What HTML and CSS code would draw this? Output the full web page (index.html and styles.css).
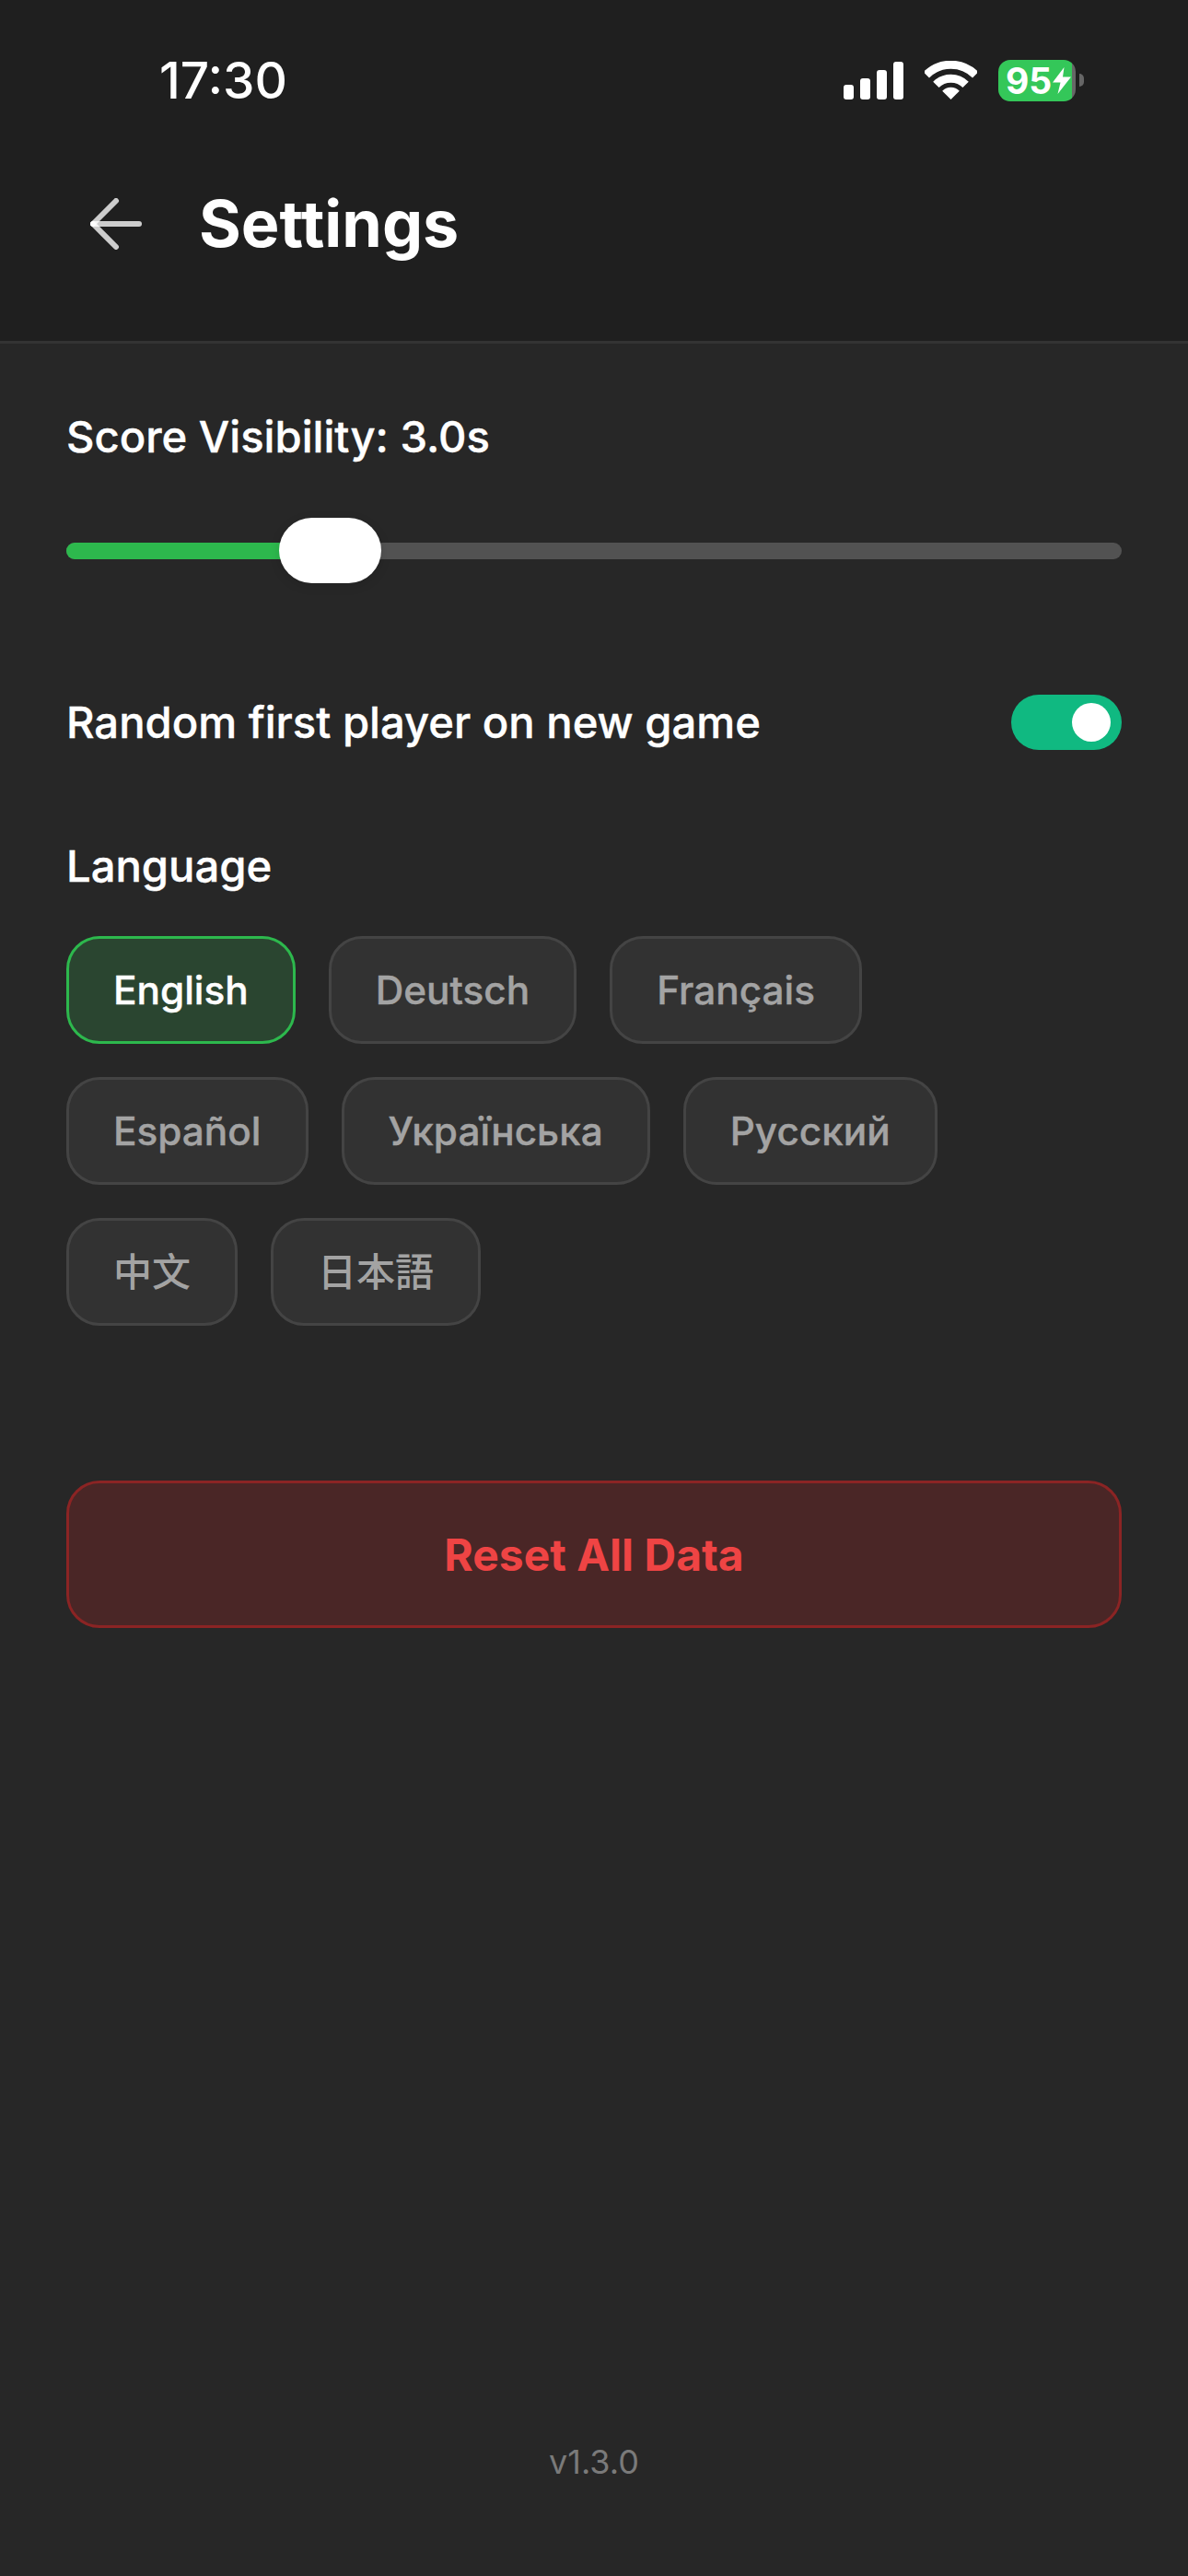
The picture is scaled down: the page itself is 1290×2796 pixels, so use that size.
FILE: index.html
```html
<!DOCTYPE html>
<html lang="en">
<head>
<meta charset="utf-8">
<title>Settings</title>
<link rel="stylesheet" href="styles.css">
</head>
<body>
<div class="screen">
  <header class="header">
    <div class="status">
      <span class="time">17:30</span>
      <div class="status-icons">
        <div class="signal"><i class="b1"></i><i class="b2"></i><i class="b3"></i><i class="b4"></i></div>
        <svg class="wifi" viewBox="0 0 57 42" width="57" height="42">
          <path d="M1.8 15.3A37.7 37.7 0 0 1 55.2 15.3" fill="none" stroke="#fff" stroke-width="9"/>
          <path d="M12.4 25.9A22.7 22.7 0 0 1 44.6 25.9" fill="none" stroke="#fff" stroke-width="9"/>
          <path d="M28.5 42L19.2 32.7A13 13 0 0 1 37.8 32.7Z" fill="#fff"/>
        </svg>
        <div class="battery">
          <div class="battery-body">
            <span class="battery-text">95</span>
            <svg class="bolt" viewBox="0 0 20 29" width="20" height="29"><path d="M12.5 0L0 16.5H8.5L5.5 29L20 10.5H11Z" fill="#fff"/></svg>
          </div>
          <div class="battery-cap"></div>
        </div>
      </div>
    </div>
    <div class="title-row">
      <svg class="back" viewBox="0 0 56 56" width="56" height="56">
        <g stroke="#fff" stroke-opacity="0.78" stroke-width="6" stroke-linecap="round" fill="none">
          <path d="M3 28H53"/>
          <path d="M28 3L3 28"/>
          <path d="M3 28L28 53"/>
        </g>
      </svg>
      <h1 class="title">Settings</h1>
    </div>
  </header>
  <main class="content">
    <div class="label score-label">Score Visibility: 3.0s</div>
    <div class="slider">
      <div class="slider-fill"></div>
      <div class="slider-thumb"></div>
    </div>
    <div class="toggle-row">
      <span class="label">Random first player on new game</span>
      <div class="toggle"><div class="knob"></div></div>
    </div>
    <div class="label lang-label">Language</div>
    <div class="chips">
      <div class="chip active">English</div>
      <div class="chip">Deutsch</div>
      <div class="chip">Français</div>
      <div class="chip">Español</div>
      <div class="chip">Українська</div>
      <div class="chip">Русский</div>
      <div class="chip cjk" lang="zh-Hans">中文</div>
      <div class="chip cjk ja" lang="ja">日本語</div>
    </div>
    <div class="reset">Reset All Data</div>
    <div class="version">v1.3.0</div>
  </main>
</div>
</body>
</html>
```
FILE: styles.css
```css
* { box-sizing: border-box; }
html, body { margin: 0; padding: 0; }
body {
  width: 1290px;
  height: 2796px;
  background: #272727;
  font-family: Inter, "Noto Sans CJK SC", sans-serif;
  color: #fff;
  overflow: hidden;
}
.screen { display: flex; flex-direction: column; height: 100%; }
.header {
  background: #1f1f1f;
  border-bottom: 3px solid #333;
  height: 373px;
  display: flex;
  flex-direction: column;
}
.status {
  height: 174px;
  padding: 0 113px 0 173px;
  display: flex;
  align-items: center;
  justify-content: space-between;
}
.time { font-size: 55px; font-weight: 500; line-height: 60px; }
.status-icons { display: flex; align-items: center; gap: 23px; }
.signal { display: flex; align-items: flex-end; gap: 7px; height: 41px; }
.signal i { display: block; width: 11px; background: #fff; border-radius: 3px; }
.signal .b1 { height: 16px; }
.signal .b2 { height: 23px; }
.signal .b3 { height: 32px; }
.signal .b4 { height: 41px; }
.wifi { display: block; }
.battery { display: flex; align-items: center; gap: 4px; }
.battery-body {
  width: 84px;
  height: 45px;
  border-radius: 13px;
  background: linear-gradient(90deg, #34c759 95%, #666 95%);
  display: flex;
  align-items: center;
  padding-left: 8px;
  gap: 1px;
}
.battery-text { font-size: 39px; font-weight: 700; line-height: 45px; }
.bolt { display: block; }
.battery-cap { width: 5px; height: 14px; background: #666; border-radius: 0 7px 7px 0; }
.title-row {
  display: flex;
  align-items: center;
  height: 138px;
  padding-left: 98px;
  gap: 62px;
}
.back { display: block; }
.title { margin: 0; font-size: 70px; font-weight: 700; line-height: 80px; }
.content {
  flex: 1;
  display: flex;
  flex-direction: column;
  padding: 0 72px;
}
.label {
  font-size: 47.2px;
  font-weight: 500;
  line-height: 60px;
  -webkit-text-stroke: 0.4px currentColor;
}
.score-label { margin-top: 71px; }
.slider {
  position: relative;
  height: 18px;
  margin-top: 85px;
  background: #525252;
  border-radius: 9px;
}
.slider-fill {
  width: 250px;
  height: 18px;
  background: #2db84d;
  border-radius: 9px 0 0 9px;
}
.slider-thumb {
  position: absolute;
  left: 231px;
  top: -27px;
  width: 111px;
  height: 71px;
  background: #fff;
  border-radius: 35.5px;
  box-shadow: 0 3px 12px rgba(0, 0, 0, 0.12);
}
.toggle-row {
  display: flex;
  align-items: center;
  justify-content: space-between;
  margin-top: 147px;
}
.toggle {
  width: 120px;
  height: 60px;
  border-radius: 30px;
  background: #10b981;
  display: flex;
  align-items: center;
  justify-content: flex-end;
  padding-right: 12px;
}
.knob { width: 42px; height: 42px; border-radius: 50%; background: #fff; }
.lang-label { margin-top: 96px; }
.chips {
  display: flex;
  flex-wrap: wrap;
  gap: 36px;
  margin-top: 46px;
}
.chip {
  height: 117px;
  padding: 0 48px;
  display: flex;
  align-items: center;
  background: #323232;
  border: 3px solid #444;
  border-radius: 36px;
  color: #a3a3a3;
  font-size: 42.3px;
  font-weight: 500;
  -webkit-text-stroke: 0.4px currentColor;
}
.chip.cjk { font-size: 42px; padding-bottom: 6px; -webkit-text-stroke: 0; }
.chip.ja { font-family: Inter, "Noto Sans CJK JP", sans-serif; }
.chip.active {
  background: #2a4530;
  border-color: #2db84d;
  color: #fff;
}
.reset {
  margin-top: 168px;
  height: 160px;
  display: flex;
  align-items: center;
  justify-content: center;
  background: #4a2626;
  border: 3px solid #8b2424;
  border-radius: 36px;
  color: #ef4444;
  font-size: 48px;
  font-weight: 650;
}
.version {
  margin-top: auto;
  margin-bottom: 102px;
  text-align: center;
  font-size: 36px;
  line-height: 44px;
  color: #7a7a7a;
}
```
